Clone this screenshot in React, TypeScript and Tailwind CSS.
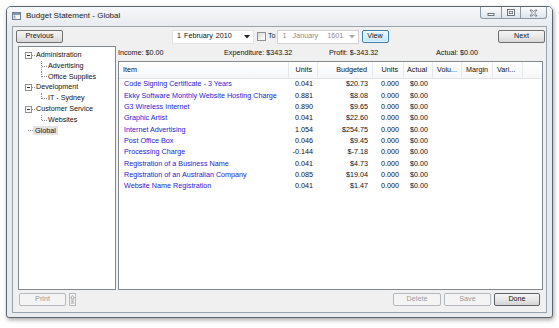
import React from "react"

const font = "font-['Liberation_Sans',Arial,sans-serif]"

const items: [string, string, string][] = [
  ["Code Signing Certificate - 3 Years", "0.041", "$20.73"],
  ["Ekky Software Monthly Website Hosting Charge", "0.881", "$8.08"],
  ["G3 Wireless Internet", "0.890", "$9.65"],
  ["Graphic Artist", "0.041", "$22.60"],
  ["Internet Advertising", "1.054", "$254.75"],
  ["Post Office Box", "0.046", "$9.45"],
  ["Processing Charge", "-0.144", "$-7.18"],
  ["Registration of a Business Name", "0.041", "$4.73"],
  ["Registration of an Australian Company", "0.085", "$19.04"],
  ["Website Name Registration", "0.041", "$1.47"],
]

const Btn = ({ label, w, disabled = false, def = false }: { label: string; w: string; disabled?: boolean; def?: boolean }) => (
  <div
    className={`${w} h-[13px] rounded-[2px] border flex items-center justify-center text-[7.2px] ${
      disabled
        ? "border-[#b5b9bd] bg-[#f4f4f4] text-[#9a9a9a]"
        : def
        ? "border-[#5f6368] bg-gradient-to-b from-[#f4f4f4] via-[#e9e9e9] to-[#d3d3d3] text-[#111]"
        : "border-[#707070] bg-gradient-to-b from-[#f4f4f4] via-[#e9e9e9] to-[#d6d6d6] text-[#111]"
    }`}
  >
    {label}
  </div>
)

const Arrow = ({ color }: { color: string }) => (
  <svg width="6" height="4" viewBox="0 0 6 4">
    <path d="M0 0 L6 0 L3 3.5 Z" fill={color} />
  </svg>
)

const Expander = () => (
  <div className="w-[7px] h-[7px] border border-[#919191] bg-white flex items-center justify-center">
    <div className="w-[3px] h-[1px] bg-[#333]" />
  </div>
)

const RootRow = ({ label }: { label: string }) => (
  <div className="flex items-center h-[10.8px]">
    <div className="w-[6px]" />
    <Expander />
    <div className="w-[3px] border-t border-dotted border-[#9a9a9a]" />
    <span className="ml-[1px]">{label}</span>
  </div>
)

const ChildRow = ({ label, last = false }: { label: string; last?: boolean }) => (
  <div className="flex items-center h-[10.8px]">
    <div className="w-[22px]" />
    <div className="relative w-[1px] h-full">
      <div className={`absolute left-0 top-0 w-[1px] border-l border-dotted border-[#8a8a8a] ${last ? "h-1/2" : "h-full"}`} />
    </div>
    <div className="w-[5px] border-t border-dotted border-[#8a8a8a]" />
    <span className="ml-[1px]">{label}</span>
  </div>
)

const cols = [
  { name: "Units", w: "w-[29px]", right: true },
  { name: "Budgeted", w: "w-[55px]", right: true },
  { name: "Units", w: "w-[31px]", right: true },
  { name: "Actual", w: "w-[29px]", right: true },
  { name: "Volu...", w: "w-[29px]", right: false },
  { name: "Margin", w: "w-[31px]", right: false },
  { name: "Vari...", w: "w-[30px]", right: false },
]

export default function App() {
  return (
    <div className={`w-[559px] h-[328px] bg-white pt-[6px] pl-[6px] ${font} text-[#111]`}>
      <div className="w-[547px] h-[312px] border border-[#5b6570] rounded-t-[5px] rounded-b-[3px] bg-[#e9ecef] flex flex-col shadow-[1px_2px_4px_rgba(0,0,0,0.35)]">
        {/* title bar */}
        <div className="h-[19px] flex rounded-t-[4px] bg-gradient-to-b from-[#f6f8fa] to-[#e8ebef]">
          <div className="flex items-center pl-[5px] h-[16px] mt-[1px]">
            <svg width="9" height="8" viewBox="0 0 9 8">
              <rect x="0.5" y="0.5" width="8" height="7" fill="#f4f6f8" stroke="#6f7d8c" />
              <rect x="1" y="1" width="7" height="2" fill="#7d9bb8" />
              <rect x="1.5" y="3.5" width="2" height="3" fill="#9fb1c2" />
            </svg>
            <span className="ml-[5px] text-[8px] text-[#1b1b1b]">Budget Statement - Global</span>
          </div>
          <div className="flex-1" />
          <div className="flex h-[12px] mr-[5px] border border-t-0 border-[#8d98a5] rounded-b-[3px] overflow-hidden bg-gradient-to-b from-[#fbfcfd] to-[#dfe4ea]">
            <div className="w-[21px] flex items-center justify-center border-r border-[#8d98a5]">
              <svg width="8" height="6" viewBox="0 0 8 6">
                <rect x="1" y="3.5" width="6" height="2" fill="#fff" stroke="#4a5563" strokeWidth="0.8" />
              </svg>
            </div>
            <div className="w-[19px] flex items-center justify-center border-r border-[#8d98a5]">
              <svg width="8" height="7" viewBox="0 0 8 7">
                <rect x="0.5" y="0.5" width="7" height="6" fill="#fff" stroke="#4a5563" strokeWidth="0.8" />
                <rect x="2.3" y="2.3" width="3.4" height="2.4" fill="none" stroke="#4a5563" strokeWidth="0.7" />
              </svg>
            </div>
            <div className="w-[25px] flex items-center justify-center">
              <svg width="9" height="8" viewBox="0 0 9 8">
                <path d="M1 1 L3 1 L4.5 2.8 L6 1 L8 1 L5.6 4 L8 7 L6 7 L4.5 5.2 L3 7 L1 7 L3.4 4 Z" fill="#fff" stroke="#4a5563" strokeWidth="0.7" />
              </svg>
            </div>
          </div>
        </div>

        {/* client area */}
        <div className="mx-[5px] h-[287px] border border-[#9aa3ad] bg-[#f0f0f0] flex flex-col text-[7.2px]">
          {/* toolbar */}
          <div className="h-[15px] mt-[2px] flex items-center pl-[3px] pr-[1px]">
            <Btn label="Previous" w="w-[47px]" />
            <div className="ml-[109px] w-[82px] h-[14px] bg-white border border-[#e2e3e6] flex items-center pl-[4px] pr-[3px]">
              <span>1</span>
              <span className="ml-[3px]">February</span>
              <span className="ml-[3px]">2010</span>
              <div className="flex-1" />
              <Arrow color="#222" />
            </div>
            <div className="ml-[3px] w-[9px] h-[9px] border border-[#8e8f8f] bg-gradient-to-br from-[#dcdcdc] to-white" />
            <span className="ml-[2px] text-[#222]">To</span>
            <div className="ml-[1px] w-[82px] h-[14px] bg-white border border-[#d0d2d6] flex items-center pl-[5px] pr-[3px] text-[#8c8c8c]">
              <span>1</span>
              <span className="ml-[6px]">January</span>
              <span className="ml-[9px]">1601</span>
              <div className="flex-1" />
              <Arrow color="#a9a9a9" />
            </div>
            <div className="ml-[3px] w-[27px] h-[13px] rounded-[2px] border border-[#3c7fb1] bg-gradient-to-b from-[#eaf6fd] via-[#d9f0fc] to-[#bee6fd] flex items-center justify-center shadow-[inset_0_0_0_1px_rgba(255,255,255,0.6)]">
              View
            </div>
            <div className="flex-1" />
            <Btn label="Next" w="w-[47px]" />
          </div>

          {/* middle */}
          <div className="h-[244px] mt-[2px] flex pl-[5px] gap-[2px]">
            <div className="w-[98px] h-full border border-[#828790] bg-white pt-[3px]">
              <RootRow label="Administration" />
              <ChildRow label="Advertising" />
              <ChildRow label="Office Supplies" last />
              <RootRow label="Development" />
              <ChildRow label="IT - Sydney" last />
              <RootRow label="Customer Service" />
              <ChildRow label="Websites" last />
              <div className="flex items-center h-[10.8px]">
                <div className="w-[9px]" />
                <div className="w-[5px] border-t border-dotted border-[#9a9a9a]" />
                <span className="bg-[#e3e3e3] px-[2px] leading-[9px]">Global</span>
              </div>
            </div>

            <div className="w-[425px] flex flex-col">
              <div className="h-[15px] flex items-center pb-[1px]">
                <span className="w-[106px]">Income: $0.00</span>
                <span className="w-[105px]">Expenditure: $343.32</span>
                <span className="w-[107px]">Profit: $-343.32</span>
                <span>Actual: $0.00</span>
              </div>
              <div className="flex-1 border border-[#828790] bg-white flex flex-col">
                <div className="h-[17px] flex border-b border-[#e2e4e8] bg-gradient-to-b from-white to-[#f5f6f8]">
                  <div className="w-[170px] border-r border-[#e6e8eb] flex items-center pl-[4px]">Item</div>
                  {cols.map((c, i) => (
                    <div
                      key={i}
                      className={`${c.w} border-r border-[#e6e8eb] flex items-center ${c.right ? "justify-end pr-[5px]" : "pl-[4px]"}`}
                    >
                      {c.name}
                    </div>
                  ))}
                </div>
                {items.map(([name, units, budget], i) => (
                  <div key={i} className="h-[11.35px] flex items-center">
                    <div className="w-[170px] pl-[5px] text-[#1c1cd6] whitespace-nowrap">{name}</div>
                    <div className="w-[29px] text-right pr-[5px]">{units}</div>
                    <div className="w-[55px] text-right pr-[5px]">{budget}</div>
                    <div className="w-[31px] text-right pr-[5px]">0.000</div>
                    <div className="w-[29px] text-right pr-[5px]">$0.00</div>
                  </div>
                ))}
              </div>
            </div>
          </div>

          {/* bottom */}
          <div className="h-[13px] mt-[3px] flex items-center pl-[6px] pr-[6px]">
            <Btn label="Print" w="w-[47px]" disabled />
            <div className="ml-[3px] w-[7px] h-[13px] border border-[#b5b9bd] bg-[#f4f4f4] flex items-center justify-center">
              <svg width="5" height="9" viewBox="0 0 5 9">
                <path d="M2.5 0.5 L4.5 3 L3.2 3 L3.2 6.5 L1.8 6.5 L1.8 3 L0.5 3 Z" fill="none" stroke="#8a8a8a" strokeWidth="0.6" />
                <line x1="0.8" y1="8" x2="4.2" y2="8" stroke="#8a8a8a" strokeWidth="0.8" />
              </svg>
            </div>
            <div className="flex-1" />
            <Btn label="Delete" w="w-[48px]" disabled />
            <div className="ml-[3px]" />
            <Btn label="Save" w="w-[47px]" disabled />
            <div className="ml-[3px]" />
            <Btn label="Done" w="w-[46px]" def />
          </div>
        </div>
      </div>
    </div>
  )
}
